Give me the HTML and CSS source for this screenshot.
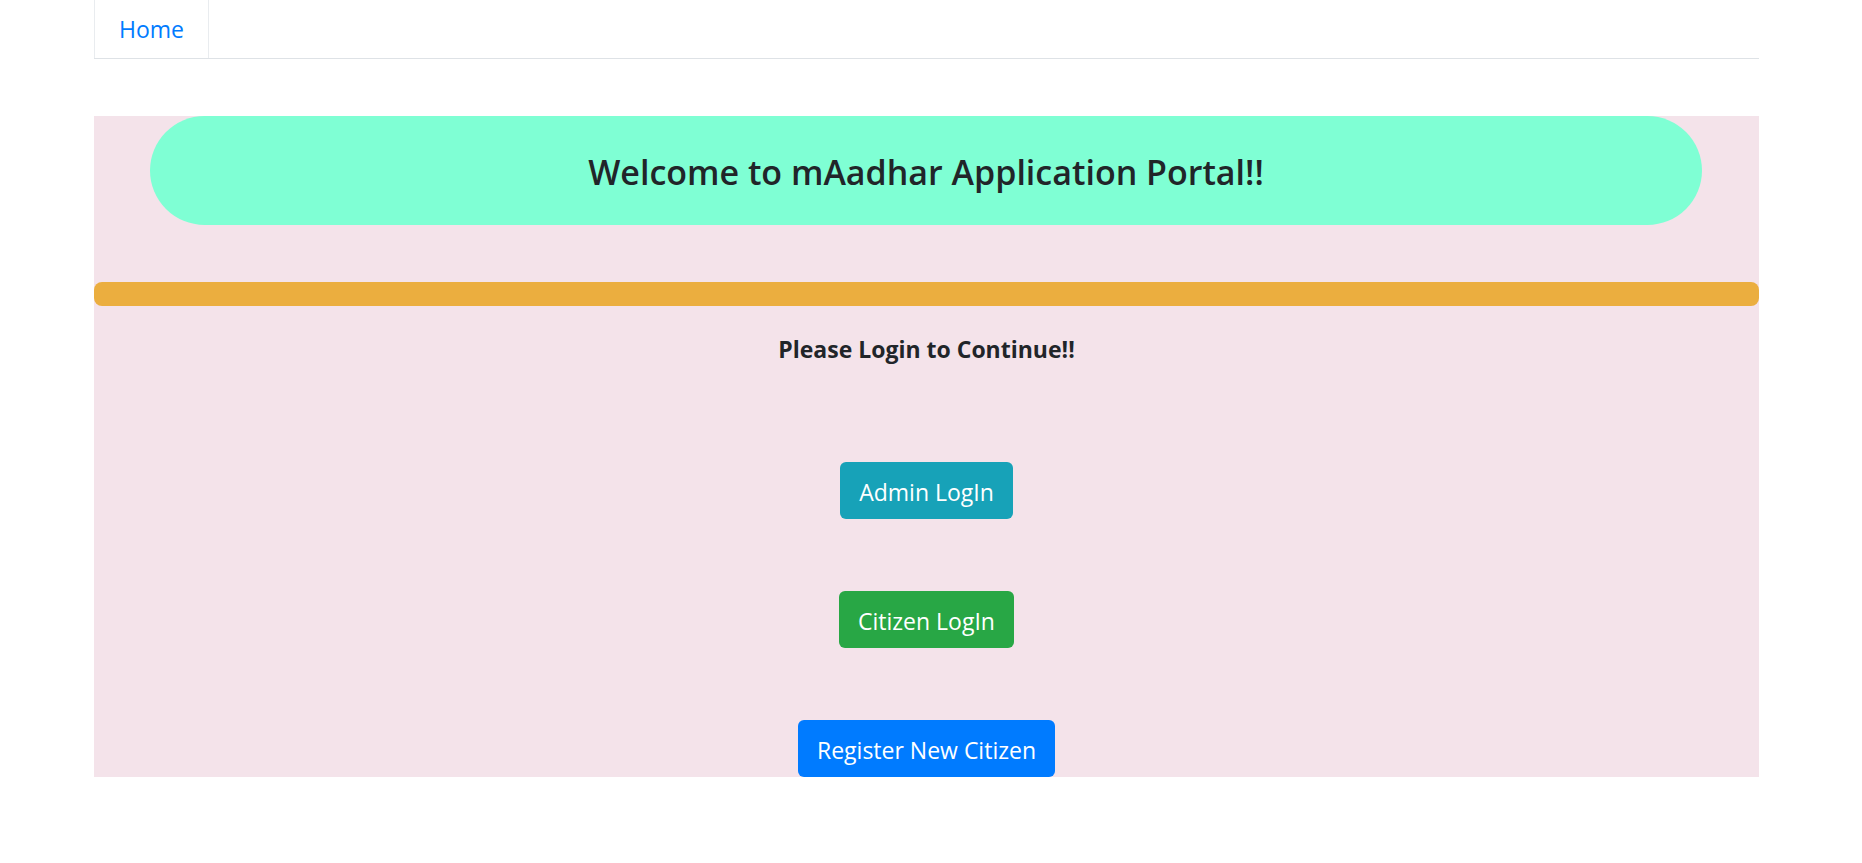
FILE: index.html
```html
<!DOCTYPE html>
<html lang="en">
<head>
<meta charset="utf-8">
<title>mAadhar Application Portal</title>
<link rel="stylesheet" href="styles.css">
</head>
<body>
<nav class="nav"><a class="nav-link" href="#">Home</a></nav>
<main class="portal">
<header class="banner"><h1 class="banner-title">Welcome to mAadhar Application Portal!!</h1></header>
<div class="divider"></div>
<p class="prompt">Please Login to Continue!!</p>
<div class="actions">
<button class="btn btn-info" type="button">Admin LogIn</button>
<button class="btn btn-success" type="button">Citizen LogIn</button>
<button class="btn btn-primary" type="button">Register New Citizen</button>
</div>
</main>
</body>
</html>
```
FILE: styles.css
```css
* {
  box-sizing: border-box;
}

body {
  margin: 0;
  padding: 0 103px 0 94px;
  background: #fff;
  color: #212529;
  font-family: "Segoe UI", "Open Sans", "Noto Sans", sans-serif;
  font-size: 23px;
  line-height: 36px;
}

.nav {
  display: flex;
  margin-bottom: 57px;
  border-bottom: 1px solid #dee2e6;
}

.nav-link {
  padding: 11px 24px;
  border: solid #e9ecef;
  border-width: 0 1px;
  color: #007bff;
  text-decoration: none;
}

.portal {
  background: #f4e3ea;
}

.banner {
  margin: 0 57px 57px 56px;
  padding: 35px 24px 31px;
  border-radius: 56px;
  background: #7fffd4;
  text-align: center;
}

.banner-title {
  margin: 0;
  font-size: 34px;
  font-weight: 600;
  line-height: 43px;
}

.divider {
  height: 24px;
  border-radius: 8px;
  background: #ebae3f;
}

.prompt {
  margin: 0;
  padding: 25px 0 95px;
  font-weight: 700;
  text-align: center;
}

.actions {
  display: flex;
  flex-direction: column;
  align-items: center;
  gap: 72px;
}

.btn {
  padding: 12px 19px 9px;
  border: 0;
  border-radius: 6px;
  color: #fff;
  font: inherit;
  cursor: pointer;
}

.btn-info {
  background: #17a2b8;
}

.btn-success {
  background: #28a745;
}

.btn-primary {
  background: #007bff;
}
```
